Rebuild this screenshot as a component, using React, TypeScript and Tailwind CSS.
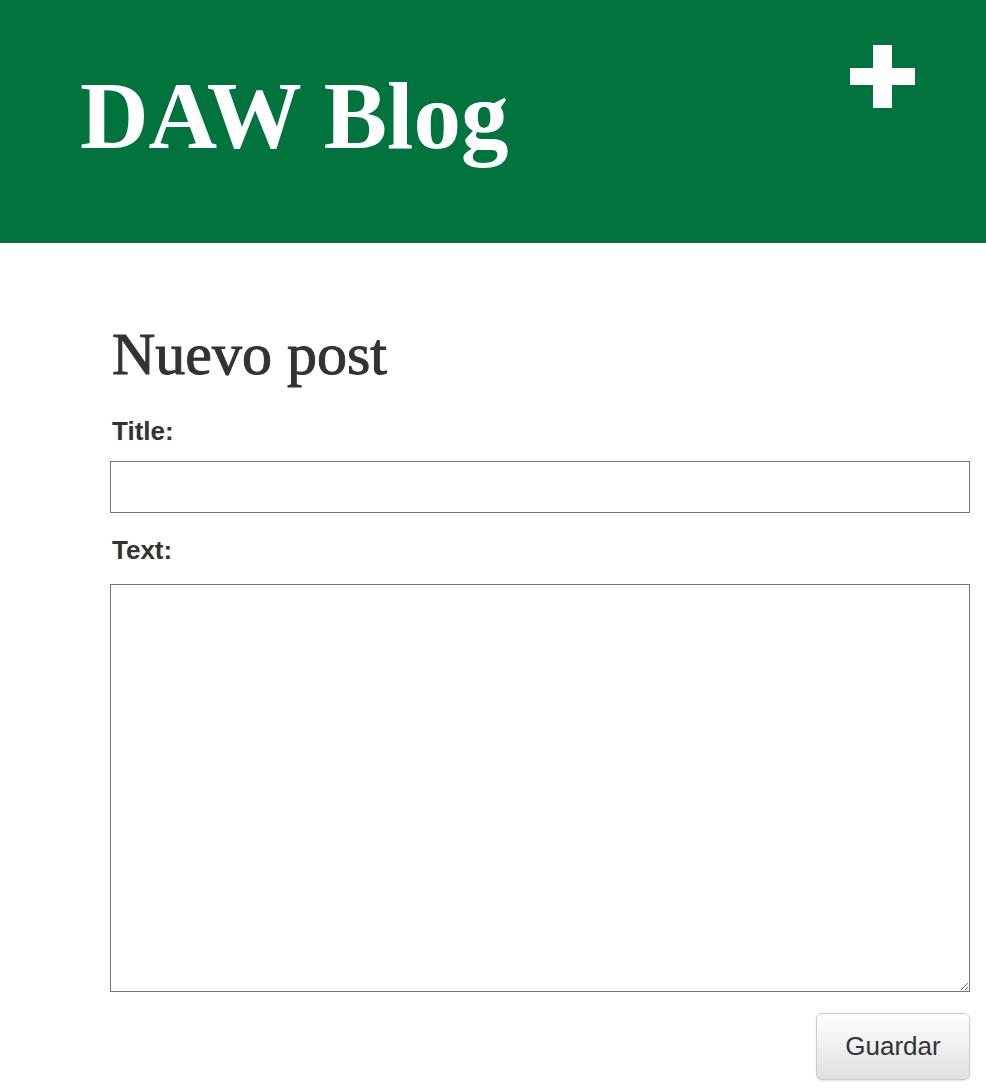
import React from 'react';

const PlusIcon = () => (
  <svg width="65" height="63" viewBox="0 0 65 63" fill="white">
    <rect x="23" y="0" width="19" height="63" />
    <rect x="0" y="23" width="65" height="17" />
  </svg>
);

export default function App() {
  return (
    <div className="min-h-[1090px] bg-white text-[#333]">
      <header className="relative h-[243px] bg-[#00733f]">
        <h1 className="pl-[80px] pt-[66px] font-['Liberation_Serif',serif] text-[95px] font-bold leading-[100px] text-white">
          DAW Blog
        </h1>
        <a href="#" className="absolute left-[850px] top-[45px]">
          <PlusIcon />
        </a>
      </header>

      <main className="pl-[110px] pr-[16px] pt-[78px]">
        <h2 className="pl-[2px] font-['Liberation_Serif',serif] text-[60px] leading-[66px] [-webkit-text-stroke:1px_#333]">
          Nuevo post
        </h2>
        <form className="mt-[29px] font-['Liberation_Sans',Arial,sans-serif] text-[#333]">
          <label className="block pl-[2px] text-[26px] font-bold leading-[30px]">Title:</label>
          <input
            type="text"
            className="mt-[15px] block h-[52px] w-full border border-[#767676] bg-white px-2 text-[20px] outline-none"
          />
          <label className="mt-[22px] block pl-[2px] text-[26px] font-bold leading-[30px]">Text:</label>
          <textarea className="mt-[19px] block h-[408px] w-full resize border border-[#767676] bg-white p-2 text-[20px] outline-none" />
          <div className="mt-[21px] flex justify-end">
            <button
              type="button"
              className="h-[67px] w-[154px] rounded-[6px] border border-[#cccccc] bg-gradient-to-b from-white to-[#e0e0e0] text-[26px] text-[#333] shadow-[0_1px_2px_rgba(0,0,0,0.12)]"
            >
              Guardar
            </button>
          </div>
        </form>
      </main>
    </div>
  );
}
